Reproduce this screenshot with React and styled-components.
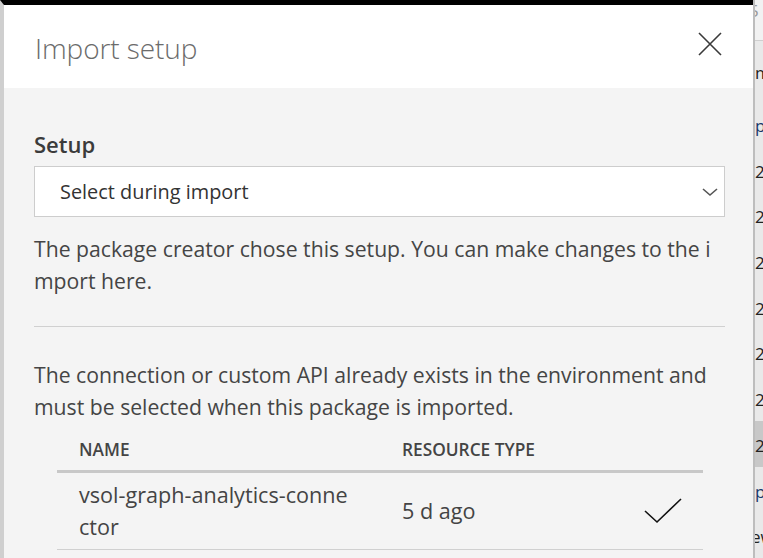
import React from "react";
import styled, { createGlobalStyle } from "styled-components";

const Global = createGlobalStyle`
  html, body { margin: 0; padding: 0; }
  body { font-family: "Open Sans", "Noto Sans", sans-serif; background: #ebebeb; }
  * { box-sizing: border-box; }
`;

const Page = styled.div`
  display: flex;
  width: 763px;
  height: 558px;
  overflow: hidden;
`;

const Panel = styled.section`
  width: 753px;
  flex: none;
  display: flex;
  flex-direction: column;
  border-top: 5px solid #000;
  border-left: 4px solid #cfcfcf;
  background: #f4f4f4;
`;

const Header = styled.header`
  height: 83px;
  flex: none;
  background: #fff;
  display: flex;
  align-items: center;
  justify-content: space-between;
  padding: 0 30px 0 31px;
`;

const Title = styled.h1`
  margin: 3px 0 0;
  font-size: 28px;
  font-weight: 300;
  color: #6b6b6b;
  letter-spacing: -0.1px;
`;

const CloseButton = styled.button`
  border: 0;
  background: none;
  padding: 0;
  width: 26px;
  height: 26px;
  display: flex;
  align-items: center;
  justify-content: center;
  margin-bottom: 6px;
`;

const Body = styled.div`
  padding: 42px 28px 0 30px;
  display: flex;
  flex-direction: column;
`;

const Label = styled.label`
  font-size: 22px;
  font-weight: 600;
  color: #3b3b3b;
  line-height: 28px;
  margin-bottom: 8px;
`;

const Select = styled.div`
  height: 51px;
  background: #fff;
  border: 1px solid #cdcdcd;
  display: flex;
  align-items: center;
  justify-content: space-between;
  padding: 0 5px 0 25px;
  font-size: 19.9px;
  color: #333;
`;

const Para = styled.p`
  margin: ${(p) => p.$mt || 0}px 0 0;
  font-size: 21.2px;
  line-height: 32px;
  color: #454545;
  word-break: break-all;
`;

const Divider = styled.hr`
  margin: 29px 0 0;
  border: 0;
  border-top: 1px solid #d0d0d0;
`;

const Table = styled.div`
  margin: 0 22px 0 23px;
  display: flex;
  flex-direction: column;
`;

const Row = styled.div`
  display: grid;
  grid-template-columns: 323px 1fr 59px;
  align-items: center;
  padding-left: 22px;
  border-bottom: ${(p) => (p.$head ? "3px solid #c8c8c8" : "1px solid #d0d0d0")};
  height: ${(p) => p.$h}px;
`;

const HeadCell = styled.div`
  font-size: 17.3px;
  font-weight: 600;
  color: #444;
  padding-top: 6px;
`;

const Cell = styled.div`
  font-size: 21.6px;
  line-height: 32px;
  color: #444;
  word-break: break-all;
  padding-right: ${(p) => p.$pr || 0}px;
`;

const Backdrop = styled.aside`
  flex: 1;
  border-left: 2px solid #bdbdbd;
  background: #e9e9e9;
  display: flex;
  flex-direction: column;
  overflow: hidden;
  font-family: "Open Sans", sans-serif;
  font-size: 17px;
  color: #222;
`;

const BgTop = styled.div`
  height: 42px;
  border-bottom: 1px solid #cfcfcf;
  background: #f2f2f2;
  color: #999;
  line-height: 22px;
  text-indent: -6px;
`;

const BgRow = styled.div`
  height: ${(p) => p.$h || 47}px;
  display: flex;
  align-items: center;
  padding-top: 3px;
  background: ${(p) => (p.$sel ? "#c8c8c8" : "transparent")};
  color: ${(p) => (p.$blue ? "#1b3a6b" : "#222")};
  white-space: nowrap;
  margin-left: ${(p) => p.$ml || 0}px;
`;

export default function App() {
  const bg = [
    { t: "m", h: 62 },
    { t: "p", blue: true },
    { t: "2" },
    { t: "2" },
    { t: "2" },
    { t: "2" },
    { t: "2" },
    { t: "2" },
    { t: "2", sel: true },
    { t: "p", blue: true },
    { t: "ew", ml: -4 },
  ];
  return (
    <Page>
      <Global />
      <Panel>
        <Header>
          <Title>Import setup</Title>
          <CloseButton aria-label="Close">
            <svg width="24" height="24" viewBox="0 0 24 24">
              <path d="M1 1 L23 23 M23 1 L1 23" stroke="#3a3a3a" strokeWidth="1.6" fill="none" />
            </svg>
          </CloseButton>
        </Header>
        <Body>
          <Label>Setup</Label>
          <Select>
            <span>Select during import</span>
            <svg width="18" height="12" viewBox="0 0 18 12">
              <path d="M2 3 L9 9 L16 3" stroke="#555" strokeWidth="1.6" fill="none" />
            </svg>
          </Select>
          <Para $mt={16}>
            The package creator chose this setup. You can make changes to the import here.
          </Para>
          <Divider />
          <Para $mt={32}>
            The connection or custom API already exists in the environment and must be selected when this package is imported.
          </Para>
          <Table>
            <Row $head $h={50}>
              <HeadCell>NAME</HeadCell>
              <HeadCell>RESOURCE TYPE</HeadCell>
              <span />
            </Row>
            <Row $h={77}>
              <Cell $pr={46}>vsol-graph-analytics-connector</Cell>
              <Cell>5 d ago</Cell>
              <svg width="38" height="28" viewBox="0 0 38 28">
                <path d="M1 14 L13 25 L37 2" stroke="#111" strokeWidth="1.6" fill="none" />
              </svg>
            </Row>
          </Table>
        </Body>
      </Panel>
      <Backdrop>
        <BgTop>5</BgTop>
        {bg.map((r, i) => (
          <BgRow key={i} $h={r.h} $sel={r.sel} $blue={r.blue} $ml={r.ml}>
            {r.t}
          </BgRow>
        ))}
      </Backdrop>
    </Page>
  );
}
